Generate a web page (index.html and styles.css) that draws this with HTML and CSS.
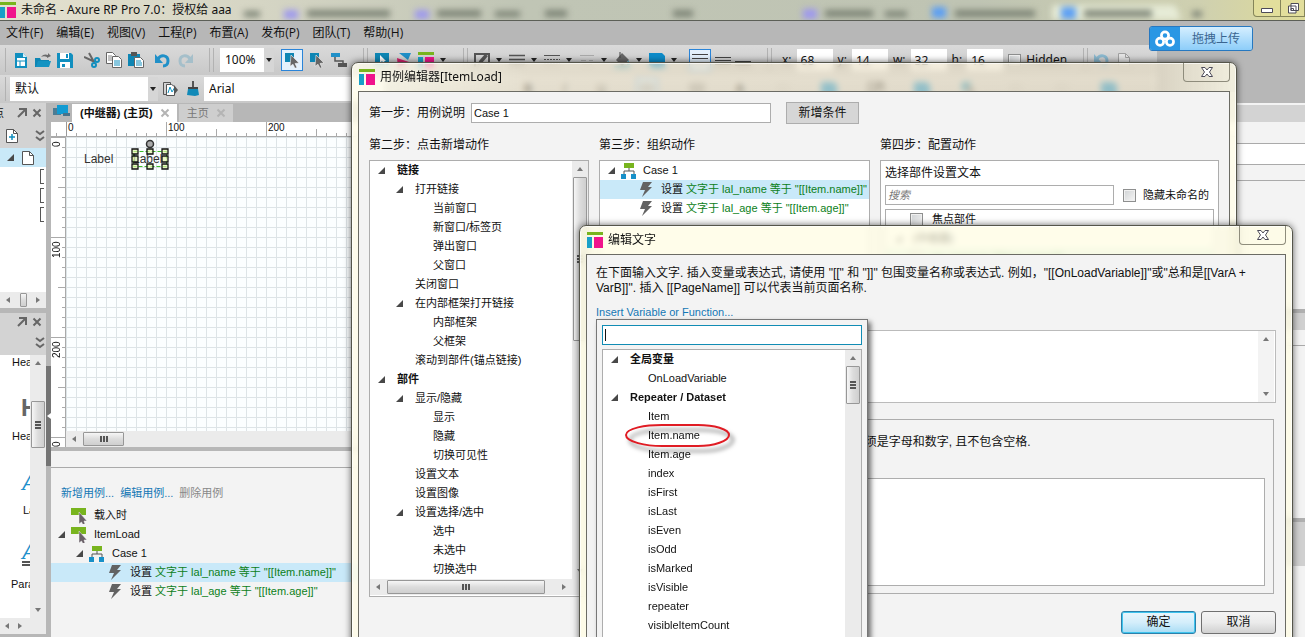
FILE: index.html
```html
<!DOCTYPE html>
<html lang="zh-CN">
<head>
<meta charset="utf-8">
<title>未命名 - Axure RP Pro 7.0</title>
<link rel="stylesheet" href="styles.css">
</head>
<body>
<svg class="defs" aria-hidden="true">
  <symbol id="logo" viewBox="0 0 16 16"><path d="M0 0h16v3H0z" fill="#78b41e"/><path d="M0 5h5v11H0z" fill="#18a0c8"/><path d="M7 5h9v11H7z" fill="#f0148c"/></symbol>
  <symbol id="new" viewBox="0 0 16 16"><path d="M2 1h8l4 4v11H2z" fill="#118fbf"/><path d="M4 6h8v8H4z" fill="#fff"/><path d="M4 9h8M7 9v5" stroke="#118fbf"/><path d="M10 1v4h4" fill="#d8f0fa"/></symbol>
  <symbol id="open" viewBox="0 0 16 16"><path d="M0 6h5l1 2h8v7H0z" fill="#0e86b4"/><path d="M3 9h13l-2 6H1z" fill="#1493c2"/><path d="M6 5c2-3 5-3 7-2V1l3 3-4 2V5c-2-1-4-1-6 0z" fill="#6b6b6b"/></symbol>
  <symbol id="save" viewBox="0 0 16 16"><path d="M0 1h14l2 2v13H0z" fill="#118fbf"/><path d="M3 1h9v6H3zM3 10h10v6H3z" fill="#fff"/><path d="M9 2h2v4H9zM5 12h3v3H5z" fill="#118fbf"/></symbol>
  <symbol id="cut" viewBox="0 0 16 16"><path d="M0 5l11 5M5 1l5 9" stroke="#666" stroke-width="2"/><circle cx="13" cy="8" r="2" fill="none" stroke="#118fbf" stroke-width="2"/><circle cx="10" cy="13" r="2" fill="none" stroke="#118fbf" stroke-width="2"/></symbol>
  <symbol id="copy" viewBox="0 0 16 16"><path d="M.5.5h6l3 3v8h-9z" fill="#fff" stroke="#666"/><path d="M2 4h4M2 6h4M2 8h4" stroke="#888"/><path d="M6.500 4.500h6l3 3v8h-9z" fill="#fff" stroke="#666"/><path d="M8 9h6M8 11h6M8 13h6" stroke="#118fbf"/></symbol>
  <symbol id="paste" viewBox="0 0 16 16"><path d="M0 2h12v12H0z" fill="#0e86b4"/><path d="M3 0h6v4H3z" fill="#555"/><path d="M6.500 5.500h6l3 3v7h-9z" fill="#fff" stroke="#666"/><path d="M8 9h5M8 11h6M8 13h6" stroke="#118fbf"/></symbol>
  <symbol id="undo" viewBox="0 0 16 16"><path d="M3 7c3-5 10-4 10 2 0 3-2 5-5 5" fill="none" stroke="#2090c8" stroke-width="3"/><path d="M0 2v9h8z" fill="#2090c8"/></symbol>
  <symbol id="redo" viewBox="0 0 16 16"><path d="M13 7C10 2 3 3 3 9c0 3 2 5 5 5" fill="none" stroke="#a5bfca" stroke-width="3"/><path d="M16 2v9H8z" fill="#a5bfca"/></symbol>
  <symbol id="select" viewBox="0 0 16 16"><path d="M1 1h9v9H1z" fill="#0e86b4"/><path d="M7 3l8 8-4 .5 2 4-2 .8-2-4-3 2z" fill="#666" stroke="#f4f4f4" stroke-width=".6"/></symbol>
  <symbol id="connect" viewBox="0 0 16 16"><path d="M0 1h9v4H0z" fill="#2090c8"/><path d="M4 5v4h8v3" fill="none" stroke="#555" stroke-width="1.500"/><path d="M7 11h9v4H7z" fill="#555"/></symbol>
  <symbol id="play" viewBox="0 0 16 16"><path d="M1 1h14v12H1z" fill="#0e86b4"/><path d="M6 3v8l2-2 3 4 1-1-2-3h2z" fill="#fff"/></symbol>
  <symbol id="share" viewBox="0 0 16 16"><path d="M3 1h12l-3 7z" fill="#2090c8"/><path d="M1 6l12 4-11 6z" fill="#d8206c"/></symbol>
  <symbol id="pen" viewBox="0 0 16 16"><path d="M1 15V2h14v10" fill="none" stroke="#555" stroke-width="2"/><path d="M4 13l1-4 6-7 3 2-6 7z" fill="#555"/></symbol>
  <symbol id="lines" viewBox="0 0 16 16"><path d="M0 3.500h16M0 7.500h16M0 11.500h16" stroke="#555" stroke-width="1.500"/></symbol>
  <symbol id="dots" viewBox="0 0 16 16"><path d="M0 3.500h16" stroke="#555"/><path d="M0 7.500h16M0 11.500h16" stroke="#555" stroke-dasharray="2 1"/></symbol>
  <symbol id="ends" viewBox="0 0 16 16"><path d="M1 3.500h14M2 8.500h5m3 0h4M3 12.500h10" stroke="#aaa"/></symbol>
  <symbol id="bucket" viewBox="0 0 16 16"><path d="M8 1l7 7-7 6-6-6z" fill="#666"/><path d="M6 0v6" stroke="#444"/><path d="M14 8l2 5h-3z" fill="#18a0c8"/><path d="M0 14h16v2H0z" fill="#18a0c8"/></symbol>
  <symbol id="shape" viewBox="0 0 16 16"><path d="M0 1h13l3 3v12H3l-3-3z" fill="#0d8cca"/></symbol>
  <symbol id="top" viewBox="0 0 16 16"><path d="M0 2.500h16M0 6.500h16M0 10.500h16" stroke="#444"/></symbol>
  <symbol id="middle" viewBox="0 0 16 16"><path d="M0 5.500h16M0 8.500h16M0 12.500h16" stroke="#444"/></symbol>
  <symbol id="bottom" viewBox="0 0 16 16"><path d="M0 9.500h16M0 13.500h16" stroke="#444"/></symbol>
  <symbol id="style" viewBox="0 0 16 16"><path d="M1.500 1.500h7v12h-7z" fill="none" stroke="#555"/><path d="M4.500 3.500h5l3 2v9h-8z" fill="#fff" stroke="#555"/><path d="M6 12l2-6 2 5 3-5" fill="none" stroke="#1496c4"/><path d="M12 4l4 5-4 5z" fill="#555"/></symbol>
  <symbol id="brush" viewBox="0 0 16 16"><path d="M7 0h2v6H7z" fill="#555"/><path d="M3 6h10v2H3z" fill="#444"/><path d="M3 8h10l1 6-4 1-8-1z" fill="#128ab8"/></symbol>
  <symbol id="pop" viewBox="0 0 12 12"><path d="M3 2h7v7M10 2L2 10" fill="none" stroke="#666" stroke-width="2"/></symbol>
  <symbol id="x" viewBox="0 0 12 12"><path d="M2.500 2.500l7 7m0-7l-7 7" stroke="#666" stroke-width="2"/></symbol>
  <symbol id="x-light" viewBox="0 0 12 12"><path d="M2.500 2.500l7 7m0-7l-7 7" stroke="#b4b4b4" stroke-width="2"/></symbol>
  <symbol id="chev" viewBox="0 0 12 12"><path d="M2 1l4 3 4-3M2 7l4 3 4-3" fill="none" stroke="#666" stroke-width="2"/></symbol>
  <symbol id="addpage" viewBox="0 0 14 16"><path d="M1.500 1.500h7l4 4v9h-11z" fill="#fff" stroke="#555"/><path d="M8.500 1.500v4h4" fill="none" stroke="#555"/><path d="M7 6v6M4 9h6" stroke="#118fbf" stroke-width="1.500"/></symbol>
  <symbol id="page" viewBox="0 0 14 16"><path d="M1.500 1.500h7l4 4v9h-11z" fill="#fff" stroke="#555"/><path d="M8.500 1.500v4h4" fill="none" stroke="#555"/></symbol>
  <symbol id="home" viewBox="0 0 17 16"><path d="M0 4h8v7H0z" fill="#4c7c94"/><path d="M4 1h11v9H4z" fill="#129bd2"/><path d="M10 9h7v3h-7z" fill="#48738a"/></symbol>
  <symbol id="event" viewBox="0 0 16 16"><path d="M0 0h15v7H0z" fill="#78b41e"/><path d="M8 4v12l2.500-2 1.500 3 2-1-1-3h3z" fill="#6a6068" stroke="#f4f4f4" stroke-width=".5"/></symbol>
  <symbol id="case" viewBox="0 0 16 16"><path d="M3 0h10v5H3z" fill="#78b41e"/><path d="M8 5v3M3 12V8h10v4" fill="none" stroke="#555"/><path d="M0 11h5v5H0zM10 11h5v5h-5z" fill="#1890c8"/></symbol>
  <symbol id="bolt" viewBox="0 0 14 16"><path d="M4 0h9L9 5h4L3 15l3-7H1z" fill="#626262"/></symbol>
  <symbol id="tri" viewBox="0 0 9 9"><path d="M8 1v7H1z" fill="#484848"/></symbol>
  <symbol id="up" viewBox="0 0 8 8"><path d="M1 6l3-4 3 4z" fill="#777"/></symbol>
  <symbol id="down" viewBox="0 0 8 8"><path d="M1 2l3 4 3-4z" fill="#777"/></symbol>
  <symbol id="left" viewBox="0 0 8 8"><path d="M6 1L2 4l4 3z" fill="#777"/></symbol>
  <symbol id="right" viewBox="0 0 8 8"><path d="M2 1l4 3-4 3z" fill="#777"/></symbol>
  <symbol id="caret" viewBox="0 0 8 8"><path d="M1 2h6L4 6z" fill="#222"/></symbol>
  <symbol id="close" viewBox="0 0 14 12"><path d="M1.500 1.500h3.500l2 2.500 2-2.500h3.500L9.500 6l3 4.500H9L7 8l-2 2.500H1.500l3-4.500z" fill="#fff" stroke="#4c4a58"/></symbol>
  <symbol id="cloud" viewBox="0 0 24 20"><g fill="none" stroke="#fff" stroke-width="3"><circle cx="12" cy="6" r="4"/><circle cx="6.500" cy="13" r="4"/><circle cx="17.500" cy="13" r="4"/></g></symbol>
</svg>

<div class="app">
  <header class="titlebar">
    <svg class="ghost-tabs" viewBox="0 0 1305 20" preserveAspectRatio="none" aria-hidden="true">
      <path d="M1052 20V8q0-3 4-3h116q4 0 6 6l3 9z" fill="#e6ebd6"/>
      <path d="M244 11h16v6h-16zM307 10h83v7h-83zM437 10h44v7h-44zM495 11h25v6h-25zM545 10h22v7h-22zM673 10h20v7h-20zM825 10h48v7h-48zM885 11h22v6h-22zM955 10h80v7h-80zM1084 10h68v7h-68zM1192 11h10v6h-10z" fill="#7d8476"/>
      <path d="M284 10h14v9h-14zM415 10h14v9h-14zM803 9h14v10h-14z" fill="#9d98ee"/>
      <path d="M932 7h14v11h-14zM1061 7h15v12h-15z" fill="#5b9ff4"/>
    </svg>
    <svg class="i16"><use href="#logo"/></svg>
    <span class="app-name">未命名 - Axure RP Pro 7.0：授权给 aaa</span>
    <div class="win-buttons">
      <button aria-label="最小化"><svg viewBox="0 0 14 12"><path d="M1.500 6.500h11v4h-11z" fill="#fff" stroke="#4c4a58"/></svg></button>
      <button aria-label="还原"><svg viewBox="0 0 14 12"><path d="M5 1.500h7.500v7H5zM2.500 4h7.500v7H2.500z" fill="#fff" stroke="#4c4a58"/><path d="M5 6.500h2.500v2H5z" fill="none" stroke="#4c4a58"/></svg></button>
    </div>
  </header>

  <nav class="menubar">
    <a href="#">文件(F)</a><a href="#">编辑(E)</a><a href="#">视图(V)</a><a href="#">工程(P)</a><a href="#">布置(A)</a><a href="#">发布(P)</a><a href="#">团队(T)</a><a href="#">帮助(H)</a>
  </nav>

  <div class="toolbar">
    <span class="grip"></span>
    <div class="group">
      <button aria-label="新建"><svg class="i16"><use href="#new"/></svg></button>
      <button aria-label="打开"><svg class="i16"><use href="#open"/></svg></button>
      <button aria-label="保存"><svg class="i16"><use href="#save"/></svg></button>
    </div>
    <div class="group">
      <button aria-label="剪切"><svg class="i16"><use href="#cut"/></svg></button>
      <button aria-label="复制"><svg class="i16"><use href="#copy"/></svg></button>
      <button aria-label="粘贴"><svg class="i16"><use href="#paste"/></svg></button>
    </div>
    <div class="group">
      <button aria-label="撤销"><svg class="i16"><use href="#undo"/></svg></button>
      <button aria-label="重做"><svg class="i16"><use href="#redo"/></svg></button>
    </div>
    <span class="grip double"></span>
    <label class="combo zoom-level"><select aria-label="缩放"><option>100%</option></select><svg class="i8"><use href="#caret"/></svg></label>
    <div class="group">
      <button class="active" aria-label="选择"><svg class="i16"><use href="#select"/></svg></button>
      <button aria-label="包含选择"><svg class="i16"><use href="#select"/></svg></button>
      <button aria-label="连接线"><svg class="i16"><use href="#connect"/></svg></button>
    </div>
    <span class="grip double"></span>
    <div class="group">
      <button aria-label="预览"><svg class="i16"><use href="#play"/></svg></button>
      <button aria-label="共享"><svg class="i16"><use href="#share"/></svg></button>
      <button class="drop" aria-label="发布"><svg class="i16"><use href="#logo"/></svg><svg class="i8"><use href="#caret"/></svg></button>
    </div>
    <span class="grip double"></span>
    <div class="group">
      <button class="drop" aria-label="线条颜色"><svg class="i16"><use href="#pen"/></svg><svg class="i8"><use href="#caret"/></svg></button>
      <button class="drop" aria-label="线宽"><svg class="i16"><use href="#lines"/></svg><svg class="i8"><use href="#caret"/></svg></button>
      <button class="drop" aria-label="线型"><svg class="i16"><use href="#dots"/></svg><svg class="i8"><use href="#caret"/></svg></button>
      <button class="drop" aria-label="箭头"><svg class="i16"><use href="#ends"/></svg><svg class="i8"><use href="#caret"/></svg></button>
      <button class="drop" aria-label="填充"><svg class="i16"><use href="#bucket"/></svg><svg class="i8"><use href="#caret"/></svg></button>
      <button class="drop" aria-label="形状"><svg class="i16"><use href="#shape"/></svg><svg class="i8"><use href="#caret"/></svg></button>
    </div>
    <div class="group tight">
      <button class="active" aria-label="顶部对齐"><svg class="i16"><use href="#top"/></svg></button>
      <button aria-label="居中对齐"><svg class="i16"><use href="#middle"/></svg></button>
      <button aria-label="底部对齐"><svg class="i16"><use href="#bottom"/></svg></button>
    </div>
    <span class="grip double"></span>
    <div class="coords">
      <label>x: <input value="68"></label>
      <label>y: <input value="14"></label>
      <label>w: <input value="32"></label>
      <label>h: <input value="16"></label>
      <label class="hidden-opt"><input type="checkbox" class="check">Hidden</label>
    </div>
    <span class="grip double"></span>
    <div class="group faded">
      <button aria-label="后退"><svg class="i16"><use href="#undo"/></svg></button>
      <button aria-label="导出"><svg class="i16"><use href="#page"/></svg></button>
    </div>
  </div>

  <div class="toolbar second">
    <span class="grip"></span>
    <label class="combo style-name"><select aria-label="样式"><option>默认</option></select><svg class="i8"><use href="#caret"/></svg></label>
    <div class="group">
      <button aria-label="样式编辑"><svg class="i16"><use href="#style"/></svg></button>
      <button aria-label="格式刷"><svg class="i16"><use href="#brush"/></svg></button>
    </div>
    <label class="combo font-name"><select aria-label="字体"><option>Arial</option></select></label>
    <div class="format-buttons">
      <button><b>B</b></button><button><i>I</i></button><button><u>U</u></button><button class="active"><svg class="i16"><use href="#lines"/></svg></button><button><svg class="i16"><use href="#lines"/></svg></button><button><b>A</b></button><button><svg class="i16"><use href="#ends"/></svg></button><button><svg class="i16"><use href="#shape"/></svg></button><button><svg class="i16"><use href="#pen"/></svg></button><button><svg class="i16"><use href="#shape"/></svg></button><button><svg class="i16"><use href="#select"/></svg></button><button><svg class="i16"><use href="#ends"/></svg></button><button><svg class="i16"><use href="#ends"/></svg></button><button><svg class="i16"><use href="#shape"/></svg></button>
    </div>
  </div>

  <button class="upload"><span class="upload-icon"><svg><use href="#cloud"/></svg></span><span class="upload-text">拖拽上传</span></button>

  <main class="workspace">
    <aside class="sidebar">
      <div class="side-head"><span class="side-title">站点</span><svg class="i12"><use href="#pop"/></svg><svg class="i12"><use href="#x"/></svg></div>
      <div class="side-tools"><svg class="pg"><use href="#addpage"/></svg><svg class="i12"><use href="#chev"/></svg></div>
      <div class="site-list">
        <div class="site-row on"><svg class="i9"><use href="#tri"/></svg><svg class="pg"><use href="#page"/></svg></div>
        <div class="site-row child"><span></span></div>
        <div class="site-row child"><span></span></div>
        <div class="site-row child"><span></span></div>
      </div>
      <div class="hscroll mini"><svg class="i8"><use href="#left"/></svg><span class="thumb"></span><svg class="i8"><use href="#right"/></svg></div>
      <div class="side-head lower"><svg class="i12"><use href="#pop"/></svg><svg class="i12"><use href="#x"/></svg></div>
      <div class="side-tools lower"><svg class="i12"><use href="#chev"/></svg></div>
      <div class="widgets">
        <div class="widget-list">
          <span class="w-name">Heading 1</span>
          <span class="w-pic h">H</span>
          <span class="w-name">Heading 2</span>
          <span class="w-pic">A</span>
          <span class="w-name short">Label</span>
          <span class="w-pic para">A</span>
          <span class="w-name para">Paragraph</span>
        </div>
        <div class="vscroll"><svg class="i8"><use href="#up"/></svg><span class="thumb grips"></span><svg class="i8"><use href="#down"/></svg></div>
      </div>
      <div class="hscroll foot"><svg class="i8"><use href="#left"/></svg><svg class="i8"><use href="#right"/></svg></div>
    </aside>
    <div class="splitter"><span><svg class="i8" viewBox="0 0 8 8"><path d="M5 1L1 4l4 3z" fill="#fff"/></svg></span></div>

    <section class="center">
      <div class="tabs">
        <svg class="home"><use href="#home"/></svg>
        <button class="tab on">(中继器) (主页)<svg class="i12"><use href="#x-light"/></svg></button>
        <button class="tab">主页<svg class="i12"><use href="#x-light"/></svg></button>
      </div>
      <div class="hruler"><span>0</span><span>100</span><span>200</span></div>
      <div class="stage">
        <div class="vruler"><span>0</span><span>100</span><span>200</span><span>300</span></div>
        <div class="canvas-col">
          <div class="canvas">
            <span class="node first">Label</span>
            <span class="node picked">Label
              <svg class="handles" viewBox="0 0 38 34"><path d="M2.500 12.500h33v15h-33z" fill="none" stroke="#3cbc28" stroke-dasharray="4 2"/><circle cx="19" cy="5" r="3.500" fill="#aaa" stroke="#333" stroke-width="1.500"/><g fill="#e4f4a8" fill-opacity=".65" stroke="#111" stroke-width="1.300"><path d="M1 10h6v5H1zM16 10h6v5h-6zM31 10h6v5h-6zM1 17h6v6H1zM31 17h6v6h-6zM1 25h6v5H1zM16 25h6v5h-6zM31 25h6v5h-6z"/></g></svg>
            </span>
          </div>
          <div class="hscroll wide"><svg class="i8"><use href="#left"/></svg><span class="thumb grips"></span></div>
        </div>
      </div>
      <div class="events">
        <div class="event-bar"></div>
        <div class="event-links"><a href="#">新增用例...</a><a href="#">编辑用例...</a><span>删除用例</span></div>
        <ul class="tree event-tree">
          <li class="e0"><svg class="i16"><use href="#event"/></svg>载入时</li>
          <li class="e0"><svg class="i9"><use href="#tri"/></svg><svg class="i16"><use href="#event"/></svg>ItemLoad</li>
          <li class="e1"><svg class="i9"><use href="#tri"/></svg><svg class="i16"><use href="#case"/></svg>Case 1</li>
          <li class="e2 on"><svg class="i16"><use href="#bolt"/></svg>设置&nbsp;<em>文字于 lal_name 等于 "[[Item.name]]"</em></li>
          <li class="e2"><svg class="i16"><use href="#bolt"/></svg>设置&nbsp;<em>文字于 lal_age 等于 "[[Item.age]]"</em></li>
        </ul>
      </div>
    </section>

    <aside class="right">
      <div class="r-head"></div><div class="r-row"></div><div class="r-field"></div><div class="r-row low"></div><div class="r-body"></div><div class="r-split"></div><div class="r-row low"></div><div class="r-body tall"></div><div class="r-split big"></div><div class="r-body"></div>
    </aside>
  </main>

  <section class="dialog case-editor" role="dialog" aria-labelledby="case-title">
    <div class="dialog-title"><svg class="i16"><use href="#logo"/></svg><h2 id="case-title">用例编辑器[ItemLoad]</h2><button class="dialog-close" aria-label="关闭"><svg><use href="#close"/></svg></button></div>
    <div class="dialog-body">
      <div class="case-row">
        <label for="case-name">第一步：用例说明</label>
        <input id="case-name" class="box" value="Case 1">
        <button class="flat">新增条件</button>
      </div>
      <div class="columns">
        <div class="col actions">
          <h3>第二步：点击新增动作</h3>
          <div class="panel">
            <div class="scroll-row">
              <ul class="tree">
                <li class="l0"><svg class="i9"><use href="#tri"/></svg>链接</li>
                <li class="l1"><svg class="i9"><use href="#tri"/></svg>打开链接</li>
                <li class="l2">当前窗口</li>
                <li class="l2">新窗口/标签页</li>
                <li class="l2">弹出窗口</li>
                <li class="l2">父窗口</li>
                <li class="l1 leaf">关闭窗口</li>
                <li class="l1"><svg class="i9"><use href="#tri"/></svg>在内部框架打开链接</li>
                <li class="l2">内部框架</li>
                <li class="l2">父框架</li>
                <li class="l1 leaf">滚动到部件(锚点链接)</li>
                <li class="l0"><svg class="i9"><use href="#tri"/></svg>部件</li>
                <li class="l1"><svg class="i9"><use href="#tri"/></svg>显示/隐藏</li>
                <li class="l2">显示</li>
                <li class="l2">隐藏</li>
                <li class="l2">切换可见性</li>
                <li class="l1 leaf">设置文本</li>
                <li class="l1 leaf">设置图像</li>
                <li class="l1"><svg class="i9"><use href="#tri"/></svg>设置选择/选中</li>
                <li class="l2">选中</li>
                <li class="l2">未选中</li>
                <li class="l2">切换选中</li>
              </ul>
              <div class="vscroll"><svg class="i8"><use href="#up"/></svg><span class="thumb grips"></span><svg class="i8"><use href="#down"/></svg></div>
            </div>
            <div class="hscroll"><svg class="i8"><use href="#left"/></svg><span class="thumb grips"></span><svg class="i8"><use href="#right"/></svg></div>
          </div>
        </div>
        <div class="col organize">
          <h3>第三步：组织动作</h3>
          <div class="panel">
            <ul class="tree">
              <li class="c0"><svg class="i9"><use href="#tri"/></svg><svg class="i16"><use href="#case"/></svg>Case 1</li>
              <li class="c1 on"><svg class="i16"><use href="#bolt"/></svg>设置&nbsp;<em>文字于 lal_name 等于 "[[Item.name]]"</em></li>
              <li class="c1"><svg class="i16"><use href="#bolt"/></svg>设置&nbsp;<em>文字于 lal_age 等于 "[[Item.age]]"</em></li>
            </ul>
          </div>
        </div>
        <div class="col configure">
          <h3>第四步：配置动作</h3>
          <div class="panel">
            <p>选择部件设置文本</p>
            <div class="search-row"><input class="box" aria-label="搜索" placeholder="搜索"><label><input type="checkbox" class="check">隐藏未命名的</label></div>
            <div class="panel widget-tree">
              <label class="w0"><input type="checkbox" class="check">焦点部件</label>
              <div class="w1"><svg class="i9"><use href="#tri"/></svg><b>(中继器)</b></div>
              <label class="w0 lit"><input type="checkbox" class="check">lal_name to "[[Item.name]]"</label>
            </div>
          </div>
        </div>
      </div>
    </div>
  </section>

  <section class="dialog text-editor" role="dialog" aria-labelledby="text-title">
    <div class="dialog-title"><svg class="i16"><use href="#logo"/></svg><h2 id="text-title">编辑文字</h2><button class="dialog-close" aria-label="关闭"><svg><use href="#close"/></svg></button></div>
    <div class="dialog-body">
      <p class="intro">在下面输入文字. 插入变量或表达式, 请使用 "[[" 和 "]]" 包围变量名称或表达式. 例如，"[[OnLoadVariable]]"或"总和是[[VarA + VarB]]". 插入 [[PageName]] 可以代表当前页面名称.</p>
      <div class="insert">
        <a href="#">Insert Variable or Function...</a>
        <div class="popup">
          <div class="find-wrap"><input class="find" aria-label="查找变量"><span class="text-caret"></span></div>
          <div class="scroll-row panel">
            <ul class="tree">
              <li class="v0"><svg class="i9"><use href="#tri"/></svg>全局变量</li>
              <li class="v1">OnLoadVariable</li>
              <li class="v0"><svg class="i9"><use href="#tri"/></svg>Repeater / Dataset</li>
              <li class="v1">Item</li>
              <li class="v1 ringed">Item.name<svg class="ring" viewBox="0 0 116 36"><path d="M40 5h36c16 0 31 4 31 10s-15 11-31 11H40C24 26 4 22 4 15S24 5 40 5z" fill="none" stroke="#e01c24" stroke-width="2"/></svg></li>
              <li class="v1">Item.age</li>
              <li class="v1">index</li>
              <li class="v1">isFirst</li>
              <li class="v1">isLast</li>
              <li class="v1">isEven</li>
              <li class="v1">isOdd</li>
              <li class="v1">isMarked</li>
              <li class="v1">isVisible</li>
              <li class="v1">repeater</li>
              <li class="v1">visibleItemCount</li>
            </ul>
            <div class="vscroll"><svg class="i8"><use href="#up"/></svg><span class="thumb grips"></span></div>
          </div>
        </div>
      </div>
      <div class="text-area"><textarea aria-label="文字"></textarea><div class="vscroll"><svg class="i8"><use href="#up"/></svg><svg class="i8"><use href="#down"/></svg></div></div>
      <div class="locals">
        <p>在下面创建用于插入部件的局部变量, 变量名称必须是字母和数字, 且不包含空格.</p>
        <div class="locals-list"></div>
      </div>
      <div class="buttons"><button class="btn primary">确定</button><button class="btn">取消</button></div>
    </div>
  </section>
</div>
</body>
</html>
```
FILE: styles.css
```css
* { box-sizing: border-box; }
body {
  margin: 0;
  height: 100vh;
  overflow: hidden;
  font: 11px/19px "Liberation Sans", "Noto Sans CJK SC", sans-serif;
  color: #111;
  background: #b7b7b7;
}
a { color: #1377b5; text-decoration: none; }
ul, p, h2, h3 { margin: 0; padding: 0; list-style: none; font-weight: normal; }
button, input, select, textarea { font: inherit; color: inherit; margin: 0; }
button { padding: 0; border: 0; background: none; }
svg { display: block; flex: none; }
.defs { position: absolute; width: 0; height: 0; }
.i16 { width: 16px; height: 16px; }
.i12 { width: 12px; height: 12px; }
.i9 { width: 9px; height: 9px; }
.i8 { width: 8px; height: 8px; }
.pg { width: 14px; height: 16px; }

.app { position: relative; display: flex; flex-direction: column; height: 100%; overflow: hidden; }

/* title bar */
.titlebar {
  position: relative;
  display: flex;
  align-items: center;
  gap: 5px;
  height: 21px;
  flex: none;
  overflow: hidden;
  border-bottom: 1px solid #5c5f57;
  background: linear-gradient(90deg, #e4e1cf, #d5d5c4 20%, #c0c5b5 40%, #bfc4b3 75%, #cfd0b0 92%, #dedb98);
}
.titlebar > * { position: relative; }
.app-name { font: 12px/18px "Noto Sans", "Noto Sans CJK SC", sans-serif; white-space: nowrap; }
.titlebar .ghost-tabs { position: absolute; inset: 0; width: 100%; height: 20px; filter: blur(3px); }
.win-buttons { display: flex; align-self: flex-start; margin-left: auto; }
.win-buttons button { height: 17px; border: 1px solid #85855a; border-top: 0; background: #e2de9c; display: grid; place-items: center; width: 28px; }
.win-buttons button:first-child { border-bottom-left-radius: 4px; }
.win-buttons button + button { border-left: 0; width: 24px; }
.win-buttons svg { width: 14px; height: 12px; }

/* menu */
.menubar { display: flex; gap: 13px; flex: none; height: 24px; padding-left: 6px; background: #b7b7b7; font: 12px/24px "Open Sans", "Noto Sans CJK SC", sans-serif; }
.menubar a { color: #111; }

/* toolbars */
.toolbar {
  display: flex;
  align-items: center;
  flex: none;
  width: 1157px;
  height: 30px;
  padding-left: 5px;
  background: linear-gradient(#dadada, #c8c8c8);
  font: 12px/18px "Noto Sans", "Noto Sans CJK SC", sans-serif;
}
.toolbar.second { height: 28px; }
.toolbar.second .font-name { flex: 0 0 180px; }
.grip { width: 1px; height: 24px; background: #b2b2b2; margin-right: 7px; }
.second .grip { margin-right: 4px; }
.grip.double { width: 5px; background: none; border-left: 1px solid #b2b2b2; border-right: 1px solid #b2b2b2; margin: 0 6px 0 16px; }
.group { display: flex; align-items: center; gap: 6px; }
.group + .group { margin-left: 11px; }
.group.tight { gap: 4px; }
.group .drop { display: flex; align-items: center; gap: 5px; }
.active { width: 22px; height: 22px; border: 1px solid #2a84d8; background: #e4f1fc; display: grid; place-items: center; }
.faded { opacity: .4; }
.combo { display: flex; align-items: center; height: 24px; background: #fff; }
.combo select { flex: 1; min-width: 0; height: 24px; border: 0; padding: 0 0 0 5px; background: #fff; appearance: none; }
.combo svg { box-sizing: content-box; padding: 8px 1px; background: #d6d6d6; }
.zoom-level { width: 54px; margin-right: 7px; }
.style-name { width: 148px; margin-right: 4px; }
.second .group { gap: 7px; margin-right: 3px; }
.format-buttons { flex: 1; display: flex; align-items: center; justify-content: space-between; padding: 0 40px 0 140px; }
.coords { display: flex; gap: 5px; margin-left: 4px; }
.coords label { display: flex; align-items: center; gap: 5px; }
.coords input:not(.check) { width: 36px; height: 22px; border: 0; padding: 0 0 0 4px; background: #fff; }
.check { appearance: none; width: 13px; height: 13px; flex: none; border: 1px solid #8e8f8f; background: linear-gradient(135deg, #cfd2d4, #f6f6f6); box-shadow: inset 0 0 0 1px #f0f0f0; }

.upload { position: absolute; top: 26px; right: 52px; display: flex; width: 104px; height: 25px; border: 1px solid #2678c0; border-radius: 3px; overflow: hidden; }
.upload-icon { width: 30px; height: 100%; background: #2a97e4; display: grid; place-items: center; }
.upload-icon svg { width: 22px; height: 18px; }
.upload-text { flex: 1; height: 100%; background: linear-gradient(#d5efff, #8dcdf9); color: #3a6590; font-size: 12px; line-height: 24px; }

/* workspace */
.workspace { flex: 1; display: flex; min-height: 0; }
.sidebar { width: 46px; flex: none; display: flex; flex-direction: column; overflow: hidden; padding-bottom: 3px; }
.side-head, .side-tools { display: flex; align-items: center; justify-content: flex-end; gap: 3px; background: #d3d3d3; padding-right: 3px; height: 20px; flex: none; }
.side-title { display: flex; justify-content: flex-end; width: 4px; margin-right: auto; overflow: hidden; white-space: nowrap; line-height: 20px; }
.side-tools { height: 25px; justify-content: space-between; padding: 0 0 0 5px; }
.side-tools.lower { justify-content: flex-end; height: 24px; }
.side-head.lower { margin-top: 5px; height: 18px; }
.site-list { background: #fff; height: 144px; flex: none; }
.site-row { height: 19px; display: flex; align-items: center; gap: 6px; padding-left: 6px; }
.site-row.on { background: #c9e9f8; }
.site-row.child { justify-content: flex-end; padding-right: 2px; }
.site-row.child span { width: 4px; height: 15px; border: 1px solid #555; border-right: 0; }

.hscroll, .vscroll { display: flex; align-items: center; background: #ebebeb; flex: none; }
.hscroll { height: 16px; padding: 0 4px; gap: 5px; }
.vscroll { width: 16px; flex-direction: column; padding: 4px 0; gap: 4px; }
.thumb { border: 1px solid #979797; border-radius: 1px; background: linear-gradient(#f6f6f6, #dcdcdc 50%, #cfcfcf); display: grid; place-items: center; }
.vscroll .thumb { width: 14px; background: linear-gradient(90deg, #f6f6f6, #dcdcdc 50%, #cfcfcf); }
.hscroll .thumb { height: 14px; }
.grips::after { content: ""; width: 8px; height: 6px; background: repeating-linear-gradient(90deg, #555 0 2px, #ddd 2px 3px); }
.vscroll .grips::after { width: 6px; height: 8px; background: repeating-linear-gradient(#555 0 2px, #ddd 2px 3px); }
.mini { justify-content: space-between; gap: 0; }
.mini .thumb { width: 7px; }
.widgets { flex: 1; display: flex; min-height: 0; background: #fff; }
.widget-list { flex: 1; overflow: hidden; padding: 1px 0 0 12px; white-space: nowrap; line-height: 12px; }
.widget-list > span { display: block; }
.w-pic { height: 62px; padding-left: 10px; color: #2190cc; font: italic bold 24px/80px "Liberation Serif", serif; }
.w-pic.h { padding-left: 9px; font: bold 24px/80px "Liberation Sans", sans-serif; color: #666; }
.w-pic.para { height: 50px; text-decoration: underline double #555; line-height: 70px; }
.w-name.short { padding-left: 11px; }
.w-name.para { padding-top: 12px; margin-left: -1px; }
.widgets .thumb { height: 47px; margin-top: 30px; }
.widgets .vscroll svg:last-child { margin-top: auto; }
.foot { padding-left: 3px; }

.splitter { width: 5px; flex: none; background: #b7b7b7; padding-top: 263px; }
.splitter span { display: grid; place-items: center; width: 5px; height: 100px; background: #747474; overflow: hidden; }

.center { flex: 1; min-width: 0; display: flex; flex-direction: column; }
.tabs { display: flex; gap: 2px; height: 19px; flex: none; padding: 1px 0 0 2px; background: #b7b7b7; }
.home { width: 17px; height: 16px; }
.tab { display: flex; align-items: center; gap: 6px; padding: 0 6px 0 8px; background: #cecece; color: #777; line-height: 18px; }
.tab.on { background: #fff; color: #111; font-weight: bold; }
.hruler {
  display: flex;
  flex: none;
  height: 15px;
  padding-left: 15px;
  border-bottom: 1px solid #aaa;
  background:
    linear-gradient(#999, #999) 15px 0 / 1px 15px no-repeat,
    repeating-linear-gradient(90deg, #aaa 0 1px, transparent 1px 100px) 115px 0 / 100px 15px,
    repeating-linear-gradient(90deg, transparent 0 50px, #aaa 50px 51px, transparent 51px 100px) 15px 7px / 100px 8px repeat-x,
    repeating-linear-gradient(90deg, #aaa 0 1px, transparent 1px 10px) 15px 11px / 100px 4px repeat-x,
    #fff;
}
.hruler span { width: 100px; padding-left: 2px; font-size: 10px; line-height: 11px; flex: none; }
.stage { display: flex; height: 310px; flex: none; }
.vruler {
  width: 15px;
  flex: none;
  overflow: hidden;
  border-right: 1px solid #aaa;
  background:
    repeating-linear-gradient(#aaa 0 1px, transparent 1px 100px) 0 0 / 15px 100px,
    repeating-linear-gradient(transparent 0 50px, #aaa 50px 51px, transparent 51px 100px) 7px 0 / 8px 100px repeat-y,
    repeating-linear-gradient(#aaa 0 1px, transparent 1px 10px) 11px 0 / 4px 100px repeat-y,
    #fff;
}
.vruler span { display: block; width: 12px; height: 100px; padding-bottom: 4px; font-size: 10px; line-height: 12px; writing-mode: vertical-rl; transform: rotate(180deg); text-align: right; }
.canvas-col { flex: 1; display: flex; flex-direction: column; min-width: 0; }
.canvas {
  position: relative;
  flex: 1;
  background:
    repeating-linear-gradient(#dde4e7 0 1px, transparent 1px 10px),
    repeating-linear-gradient(90deg, #dde4e7 0 1px, transparent 1px 10px),
    #fbfeff;
}
.node { position: absolute; top: 14px; left: 18px; font-size: 12px; line-height: 17px; color: #333; }
.node.picked { left: 67px; }
.handles { position: absolute; left: -2px; top: -12px; width: 38px; height: 34px; }
.wide .thumb { width: 41px; }
.events { flex: 1; margin-top: 4px; background: #f3f3f3; }
.event-bar { height: 17px; border-bottom: 1px solid #aaa; }
.event-links { display: flex; gap: 6px; padding: 16px 0 3px 10px; }
.event-links span { color: #888; }

/* trees */
.tree li { display: flex; align-items: center; height: 19px; white-space: nowrap; }
.tree em { font-style: normal; color: #0c8020; }
.tree .on { background: #c9e9f9; }
.e0 .i16, .e1 .i16 { margin-right: 7px; }
.e0 { padding-left: 6px; }
.e0 .i9 { margin-right: 5px; }
.e0 .i16:first-child { margin-left: 14px; }
.e1 { padding-left: 24px; }
.e1 .i9 { margin-right: 5px; }
.e2 { padding-left: 56px; }
.e2 .i16, .c1 .i16 { margin-right: 7px; }
.l0 { padding-left: 7px; font-weight: bold; }
.l1 { padding-left: 25px; }
.l1.leaf { padding-left: 45px; }
.l2 { padding-left: 63px; }
.l0 .i9 { margin-right: 11px; }
.l1 .i9 { margin-right: 11px; }
.c0 { padding-left: 7px; }
.c0 .i9 { margin-right: 5px; }
.c0 .i16 { margin-right: 6px; }
.c1 { padding-left: 38px; }
.v0 { padding-left: 7px; font-weight: bold; }
.v0 .i9 { margin-right: 11px; }
.v1 { padding-left: 45px; }

/* properties */
.right { width: 70px; flex: none; display: flex; flex-direction: column; background: #f3f3f3; padding-top: 2px; }
.right > div { flex: none; }
.r-head { height: 17px; background: #d3d3d3; }
.r-row { height: 22px; border-bottom: 1px solid #aaa; }
.r-field { height: 21px; background: #fff; border-bottom: 1px solid #aaa; }
.r-row.low { height: 16px; }
.r-body { height: 128px; }
.r-split { height: 21px; border-top: 4px solid #b0b0b0; background: #d0d0d0; }
.r-body.tall { height: 172px; }
.r-split.big { height: 48px; }

/* windows */
.dialog {
  position: absolute;
  display: flex;
  flex-direction: column;
  bottom: -20px;
  padding: 0 6px;
  border: 1px solid #55554a;
  border-radius: 7px;
  box-shadow: 0 0 7px rgba(0, 0, 0, .6), inset 0 0 0 1px rgba(255, 255, 255, .7);
  background: rgba(255, 252, 228, .78);
  backdrop-filter: blur(3px);
}
.dialog-title { display: flex; align-items: center; gap: 5px; height: 28px; flex: none; padding-left: 1px; }
.dialog-title h2 { flex: 1; font: 12px/20px "Noto Sans", "Noto Sans CJK SC", sans-serif; }
.dialog-close { align-self: flex-start; width: 47px; height: 19px; border: 1px solid #8e8c7c; border-top: 0; border-radius: 0 0 4px 4px; display: grid; place-items: center; }
.dialog-close svg { width: 14px; height: 12px; }
.dialog-body { flex: 1; border: 1px solid #6b6b64; background: #f3f3f3; }
.case-editor {
  left: 351px;
  right: 68px;
  top: 62px;
  background:
    linear-gradient(90deg, #fffdeccc, #f0e6cc99 20%, #eadfc499 90%, #fffce8cc) 0 0 / 100% 29px no-repeat,
    linear-gradient(#fffce8d8, #fffce8d8) 0 29px no-repeat;
}
.text-editor { left: 579px; right: 12px; top: 225px; }
.panel { border: 1px solid #adadad; background: #fff; }
.box { height: 20px; border: 1px solid #adadad; background: #fff; padding: 0 2px; }
.case-editor .dialog-body { padding: 10px 10px 0; }
.case-row { display: flex; align-items: center; }
.case-row label, h3, .configure p { font-size: 12px; line-height: 20px; }
.case-row label { width: 102px; white-space: nowrap; }
.case-row .box { width: 300px; }
.flat { width: 73px; height: 22px; margin-left: 15px; border: 1px solid #adadad; background: #d6d6d6; font-size: 12px; line-height: 20px; }
.columns { display: flex; gap: 10px; align-items: flex-start; padding-top: 11px; }
.columns h3 { height: 25px; }
.actions { width: 220px; }
.actions .panel { padding-bottom: 1px; }
.organize { width: 271px; }
.organize .panel { height: 438px; }
.configure { flex: 1; }
.configure > .panel { height: 438px; padding: 2px 4px 0; }
.scroll-row { display: flex; }
.scroll-row .tree { flex: 1; min-width: 0; }
.actions .thumb { height: 164px; }
.actions .vscroll svg:last-child { margin-top: auto; }
.actions .hscroll .thumb { width: 158px; height: 14px; }
.actions .hscroll svg:last-child { margin-left: 10px; }
.search-row { display: flex; align-items: center; gap: 9px; padding-top: 2px; }
.search-row .box { width: 229px; font-style: italic; }
.search-row label, .w0 { display: flex; align-items: center; gap: 7px; height: 19px; }
.box::placeholder { color: #777; }
.widget-tree { margin-top: 4px; }
.w0 { padding-left: 24px; gap: 9px; }
.w0.lit { background: #d8f0e8; color: #0c8020; }
.w1 { display: flex; align-items: center; gap: 10px; height: 19px; padding-left: 8px; }

.text-editor .dialog-body { padding: 11px 9px 0; }
.intro { font-size: 12px; line-height: 15px; }
.insert { position: relative; padding-top: 6px; height: 34px; }
.insert > a { display: block; line-height: 20px; }
.popup { position: absolute; z-index: 1; left: 0; top: 23px; width: 272px; height: 350px; padding: 5px; border: 1px solid #777; background: #f3f3f3; box-shadow: 3px 3px 5px rgba(0, 0, 0, .55); }
.popup .panel { min-height: 340px; }
.find-wrap { position: relative; margin-bottom: 4px; }
.find { display: block; width: 100%; height: 20px; border: 1px solid #118cb4; background: #fff; padding: 0 2px; }
.text-caret { position: absolute; left: 3px; top: 4px; width: 1px; height: 12px; background: #111; }
.popup .vscroll .thumb { height: 38px; }
.ringed { position: relative; }
.ring { position: absolute; left: 19px; top: -6px; width: 116px; height: 36px; filter: drop-shadow(4px 5px 2px rgba(0, 0, 0, .5)); }
.text-area { display: flex; height: 73px; border: 1px solid #bbb; background: #fff; }
.text-area textarea { flex: 1; border: 0; background: #fff; resize: none; }
.text-area .vscroll { justify-content: space-between; margin-right: 1px; background: #f3f3f3; }
.locals { margin: 16px 2px 0 0; padding: 12px 8px 7px; border: 1px solid #adadad; }
.locals p { font-size: 12px; line-height: 20px; padding-left: 1px; white-space: nowrap; }
.locals-list { height: 108px; margin-top: 26px; border: 1px solid #adadad; background: #fff; }
.buttons { display: flex; justify-content: flex-end; gap: 5px; padding-top: 17px; }
.btn { width: 75px; height: 23px; border: 1px solid #707070; border-radius: 3px; background: linear-gradient(#f4f4f4, #ebebeb 50%, #d0d0d0); font-size: 12px; line-height: 21px; }
.btn.primary { border-color: #2c80aa; box-shadow: inset 0 0 0 1px #3fc4ee; background: linear-gradient(#eaf6fc, #d4eefb 50%, #a8dcf4); }
```
